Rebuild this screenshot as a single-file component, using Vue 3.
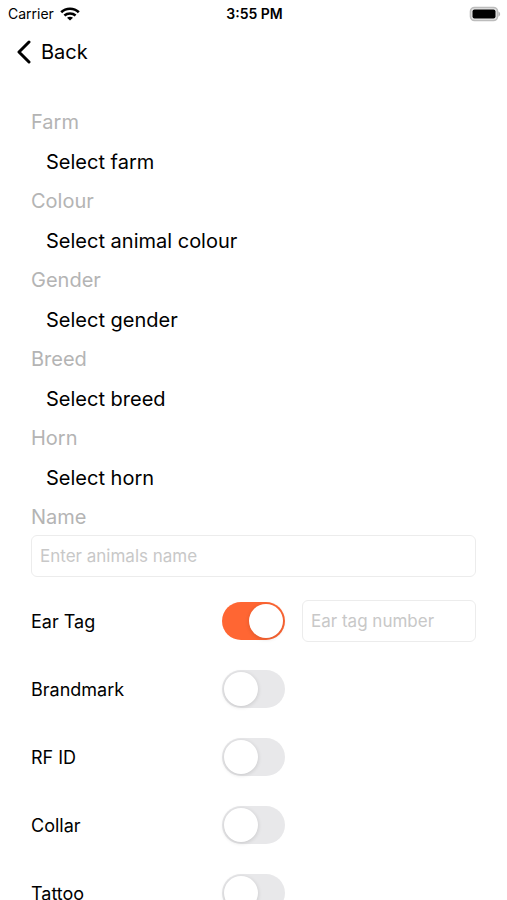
<template>
  <div class="screen">
    <!-- status bar -->
    <div class="status-bar">
      <div class="carrier">
        <span>Carrier</span>
        <svg width="20" height="14" viewBox="0 0 20 14" fill="none">
          <path d="M1.2 5.2C6 0.6 14 0.6 18.8 5.2" stroke="#000" stroke-width="2.7" />
          <path d="M4.4 8.5C7.5 5.7 12.5 5.7 15.6 8.5" stroke="#000" stroke-width="2.5" />
          <path d="M10 13.6L7 10.8C8.7 9.3 11.3 9.3 13 10.8Z" fill="#000" />
        </svg>
      </div>
      <span class="time">3:55 PM</span>
      <svg class="battery" width="32" height="16" viewBox="0 0 32 16">
        <rect x="1.5" y="1.5" width="27" height="13" rx="4" fill="#e4e4e4" stroke="#bcbcbc" stroke-width="1.6" />
        <rect x="3.5" y="3.5" width="23" height="9" rx="2" fill="#000" />
        <path d="M29.4 5.4C31.7 6.4 31.7 9.6 29.4 10.6Z" fill="#b4b4b4" />
      </svg>
    </div>

    <header class="nav">
      <button type="button" class="back-btn" @click="goBack">
        <svg width="16" height="24" viewBox="0 0 16 24" fill="none">
          <path d="M13 2L3 12L13 22" stroke="#000" stroke-width="3" stroke-linecap="round" stroke-linejoin="round" />
        </svg>
        <span>Back</span>
      </button>
    </header>

    <form class="form" @submit.prevent>
      <div v-for="field in fields" :key="field.id" class="field">
        <label :for="field.id">{{ field.label }}</label>
        <select :id="field.id" v-model="field.value">
          <option value="">{{ field.placeholder }}</option>
          <option v-for="item in field.options" :key="item" :value="item">{{ item }}</option>
        </select>
      </div>

      <div class="name-field">
        <label for="name">Name</label>
        <input id="name" v-model="name" class="text-input" type="text" placeholder="Enter animals name">
      </div>

      <!-- identification tags -->
      <div v-for="tag in tags" :key="tag.id" class="tag-row">
        <label :for="tag.id">{{ tag.label }}</label>
        <input :id="tag.id" v-model="tag.enabled" class="switch" type="checkbox" role="switch">
        <input
          v-if="tag.enabled"
          v-model="tag.number"
          class="text-input"
          type="text"
          :placeholder="tag.placeholder"
          :aria-label="tag.placeholder"
        >
      </div>
    </form>
  </div>
</template>

<script setup>
import { ref } from 'vue'

const name = ref('')

const fields = ref([
  { id: 'farm', label: 'Farm', placeholder: 'Select farm', value: '', options: [] },
  { id: 'colour', label: 'Colour', placeholder: 'Select animal colour', value: '', options: ['Black', 'Brown', 'White'] },
  { id: 'gender', label: 'Gender', placeholder: 'Select gender', value: '', options: ['Female', 'Male'] },
  { id: 'breed', label: 'Breed', placeholder: 'Select breed', value: '', options: [] },
  { id: 'horn', label: 'Horn', placeholder: 'Select horn', value: '', options: ['Horned', 'Polled'] }
])

const tags = ref([
  { id: 'ear-tag', label: 'Ear Tag', placeholder: 'Ear tag number', enabled: true, number: '' },
  { id: 'brandmark', label: 'Brandmark', placeholder: 'Brandmark', enabled: false, number: '' },
  { id: 'rf-id', label: 'RF ID', placeholder: 'RF ID number', enabled: false, number: '' },
  { id: 'collar', label: 'Collar', placeholder: 'Collar number', enabled: false, number: '' },
  { id: 'tattoo', label: 'Tattoo', placeholder: 'Tattoo number', enabled: false, number: '' }
])

const goBack = () => {
  window.history.back()
}
</script>

<style>
body {
  background-color: #fff;
}
</style>

<style scoped>
.screen {
  display: flex;
  flex-direction: column;
  height: 100vh;
  color: #000;
  font-family: Inter, "Liberation Sans", sans-serif;
}

button,
input,
select {
  font-family: inherit;
  color: inherit;
}

.status-bar {
  display: grid;
  grid-template-columns: 1fr auto 1fr;
  align-items: center;
  flex-shrink: 0;
  height: 27px;
  padding: 0 6px 0 8px;
  font-size: 14px;
}

.carrier {
  display: flex;
  align-items: center;
  gap: 6px;
}

.time {
  font-weight: 600;
}

.battery {
  justify-self: end;
}

.nav {
  display: flex;
  align-items: center;
  flex-shrink: 0;
  height: 50px;
  padding: 0 16px;
}

.back-btn {
  display: flex;
  align-items: center;
  gap: 9px;
  padding: 0;
  border: none;
  background: none;
  font-size: 20px;
  cursor: pointer;
}

.form {
  flex: 1;
  min-height: 0;
  padding: 33px 31px 0;
  overflow-y: auto;
  scrollbar-width: none;
}

.field label,
.name-field label {
  display: block;
  color: #b4b4b4;
  font-size: 20px;
  line-height: 24px;
}

.field select {
  display: block;
  width: 100%;
  height: 55px;
  padding: 0 15px;
  border: none;
  background: none;
  appearance: none;
  font-size: 20px;
  cursor: pointer;
}

.text-input {
  box-sizing: border-box;
  width: 100%;
  height: 42px;
  padding: 0 8px;
  border: 1px solid #ececec;
  border-radius: 6px;
  background-color: #fff;
  font-size: 17px;
}

.text-input::placeholder {
  color: #c8c8c8;
  opacity: 1;
}

.name-field {
  margin-bottom: 10px;
}

.name-field .text-input {
  display: block;
  margin-top: 6px;
}

.tag-row {
  display: grid;
  grid-template-columns: 1fr 63px 1fr;
  align-items: center;
  column-gap: 17px;
  height: 68px;
  font-size: 18px;
}

.switch {
  width: 63px;
  height: 38px;
  margin: 0;
  padding: 2px;
  box-sizing: border-box;
  border-radius: 19px;
  background-color: #e8e8ea;
  appearance: none;
  cursor: pointer;
}

.switch::before {
  content: "";
  display: block;
  width: 34px;
  height: 34px;
  border-radius: 50%;
  background-color: #fff;
  box-shadow: 0 1px 4px rgba(0, 0, 0, 0.15);
}

.switch:checked {
  background-color: #ff6633;
}

.switch:checked::before {
  margin-left: auto;
}
</style>
